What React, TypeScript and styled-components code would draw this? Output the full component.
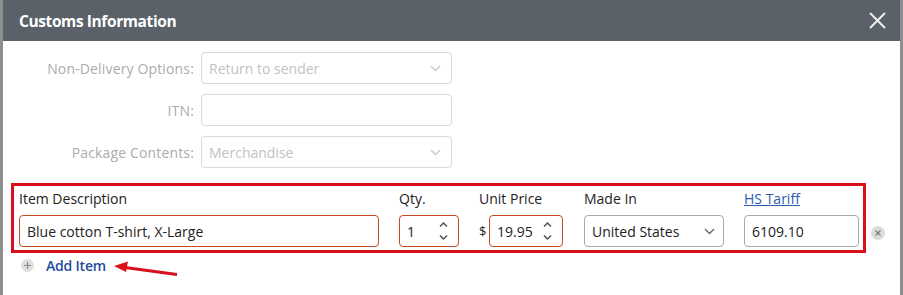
import styled, { createGlobalStyle } from "styled-components";

const GlobalStyle = createGlobalStyle`
  html, body {
    margin: 0;
    padding: 0;
    background: #8e8e8e;
    font-family: "Open Sans", "Noto Sans", sans-serif;
  }
`;

const Frame = styled.div`
  width: 903px;
  height: 295px;
  padding: 0 3px;
  box-sizing: border-box;
  background: #8e8e8e;
  overflow: hidden;
`;

const Dialog = styled.div`
  height: 100%;
  background: #ffffff;
  display: flex;
  flex-direction: column;
`;

const Header = styled.div`
  height: 41px;
  flex: none;
  background: #5a6168;
  display: flex;
  align-items: center;
  justify-content: space-between;
  padding: 0 14px 0 16px;
`;

const Title = styled.h1`
  margin: 0;
  color: #ffffff;
  font-size: 15.5px;
  font-weight: 700;
  letter-spacing: -0.4px;
`;

const CloseButton = styled.button`
  border: none;
  background: none;
  padding: 0;
  width: 18px;
  height: 18px;
  display: flex;
  align-items: center;
  justify-content: center;
  cursor: pointer;
`;

const Body = styled.div`
  padding-top: 11px;
`;

const FormGrid = styled.div`
  display: grid;
  grid-template-columns: 191px 251px;
  column-gap: 7px;
  row-gap: 10px;
`;

const FieldLabel = styled.label`
  text-align: right;
  align-self: center;
  color: #acacac;
  font-size: 14px;
  letter-spacing: 0.15px;
`;

const DisabledBox = styled.div`
  height: 32px;
  box-sizing: border-box;
  border: 1px solid #d9d9d9;
  border-radius: 4px;
  display: flex;
  align-items: center;
  justify-content: space-between;
  padding: 0 10px 0 7px;
  color: #c2c2c2;
  font-size: 14px;
`;

const ItemsRow = styled.div`
  display: flex;
  align-items: flex-end;
  margin: 15px 0 0 8px;
`;

const ItemsBox = styled.div`
  width: 855px;
  box-sizing: border-box;
  border: 3px solid #d8101c;
  padding: 3px 4px 3px 5px;
  display: flex;
  gap: 20px;
`;

const Column = styled.div<{ $w: number; $gap?: number }>`
  width: ${(p) => p.$w}px;
  margin-left: ${(p) => p.$gap ?? 0}px;
  flex: none;
  display: flex;
  flex-direction: column;
`;

const ColLabel = styled.div`
  height: 20px;
  line-height: 20px;
  margin-bottom: 6px;
  color: #222;
  font-size: 14px;
`;

const LinkLabel = styled.a`
  height: 20px;
  line-height: 20px;
  margin-bottom: 6px;
  color: #2b5cae;
  font-size: 14px;
  text-decoration: underline;
`;

const Field = styled.div<{ $tone: "error" | "plain" }>`
  height: 32px;
  box-sizing: border-box;
  border: 1px solid ${(p) => (p.$tone === "error" ? "#c84a1f" : "#a9a9a9")};
  border-radius: 4px;
  display: flex;
  align-items: center;
  justify-content: space-between;
  padding: 0 8px 0 7px;
  color: #222;
  font-size: 14px;
  flex: 1;
`;

const PriceWrap = styled.div`
  display: flex;
  align-items: center;
  gap: 3px;
`;

const Currency = styled.span`
  font-size: 13px;
  color: #222;
  width: 7px;
`;

const Spinner = styled.div`
  display: flex;
  flex-direction: column;
  gap: 8px;
  margin-right: 2px;
`;

const RemoveButton = styled.div`
  width: 14px;
  height: 14px;
  border-radius: 50%;
  background: #dcdcdc;
  margin: 0 0 13px 5px;
  display: flex;
  align-items: center;
  justify-content: center;
`;

const AddRow = styled.div`
  display: flex;
  align-items: center;
  margin: 2px 0 0 18px;
  height: 20px;
`;

const PlusCircle = styled.div`
  width: 13px;
  height: 13px;
  border-radius: 50%;
  background: #e0e0e0;
  display: flex;
  align-items: center;
  justify-content: center;
  margin-right: 12px;
`;

const AddLink = styled.span`
  color: #1f4c9c;
  font-size: 14px;
  font-weight: 600;
  letter-spacing: -0.2px;
`;

const Arrow = styled.svg`
  margin: 8px 0 0 7px;
`;

const Chevron = ({ color }: { color: string }) => (
  <svg width="11" height="7" viewBox="0 0 11 7">
    <path d="M1 1l4.5 4.5L10 1" fill="none" stroke={color} strokeWidth="1.4" />
  </svg>
);

const SpinArrows = () => (
  <Spinner>
    <svg width="9" height="5" viewBox="0 0 9 5">
      <path d="M1 4.5l3.5-3.5L8 4.5" fill="none" stroke="#555" strokeWidth="1.5" />
    </svg>
    <svg width="9" height="5" viewBox="0 0 9 5">
      <path d="M1 0.5l3.5 3.5L8 0.5" fill="none" stroke="#555" strokeWidth="1.5" />
    </svg>
  </Spinner>
);

export default function App() {
  return (
    <>
      <GlobalStyle />
      <Frame>
        <Dialog>
          <Header>
            <Title>Customs Information</Title>
            <CloseButton aria-label="Close">
              <svg width="17" height="17" viewBox="0 0 17 17">
                <path d="M1 1l15 15M16 1L1 16" stroke="#eeeeee" strokeWidth="2" />
              </svg>
            </CloseButton>
          </Header>
          <Body>
            <FormGrid>
              <FieldLabel>Non-Delivery Options:</FieldLabel>
              <DisabledBox>
                Return to sender
                <Chevron color="#c9c9c9" />
              </DisabledBox>
              <FieldLabel>ITN:</FieldLabel>
              <DisabledBox />
              <FieldLabel>Package Contents:</FieldLabel>
              <DisabledBox>
                Merchandise
                <Chevron color="#c9c9c9" />
              </DisabledBox>
            </FormGrid>

            <ItemsRow>
              <ItemsBox>
                <Column $w={360}>
                  <ColLabel>Item Description</ColLabel>
                  <Field $tone="error">Blue cotton T-shirt, X-Large</Field>
                </Column>
                <Column $w={60}>
                  <ColLabel>Qty.</ColLabel>
                  <Field $tone="error">
                    1
                    <SpinArrows />
                  </Field>
                </Column>
                <Column $w={84}>
                  <ColLabel>Unit Price</ColLabel>
                  <PriceWrap>
                    <Currency>$</Currency>
                    <Field $tone="error">
                      19.95
                      <SpinArrows />
                    </Field>
                  </PriceWrap>
                </Column>
                <Column $w={140} $gap={1}>
                  <ColLabel>Made In</ColLabel>
                  <Field $tone="plain">
                    United States
                    <Chevron color="#666" />
                  </Field>
                </Column>
                <Column $w={115}>
                  <LinkLabel href="#">HS Tariff</LinkLabel>
                  <Field $tone="plain">6109.10</Field>
                </Column>
              </ItemsBox>
              <RemoveButton>
                <svg width="6" height="6" viewBox="0 0 6 6">
                  <path d="M0.5 0.5l5 5M5.5 0.5l-5 5" stroke="#777" strokeWidth="1.1" />
                </svg>
              </RemoveButton>
            </ItemsRow>

            <AddRow>
              <PlusCircle>
                <svg width="7" height="7" viewBox="0 0 7 7">
                  <path d="M3.5 0v7M0 3.5h7" stroke="#8a8a8a" strokeWidth="1.2" />
                </svg>
              </PlusCircle>
              <AddLink>Add Item</AddLink>
              <Arrow width="66" height="16" viewBox="0 0 66 16">
                <path d="M64 13.5L12 6.5" stroke="#d8101c" strokeWidth="3" />
                <path d="M1 5L15 0.5L13 11Z" fill="#d8101c" />
              </Arrow>
            </AddRow>
          </Body>
        </Dialog>
      </Frame>
    </>
  );
}
